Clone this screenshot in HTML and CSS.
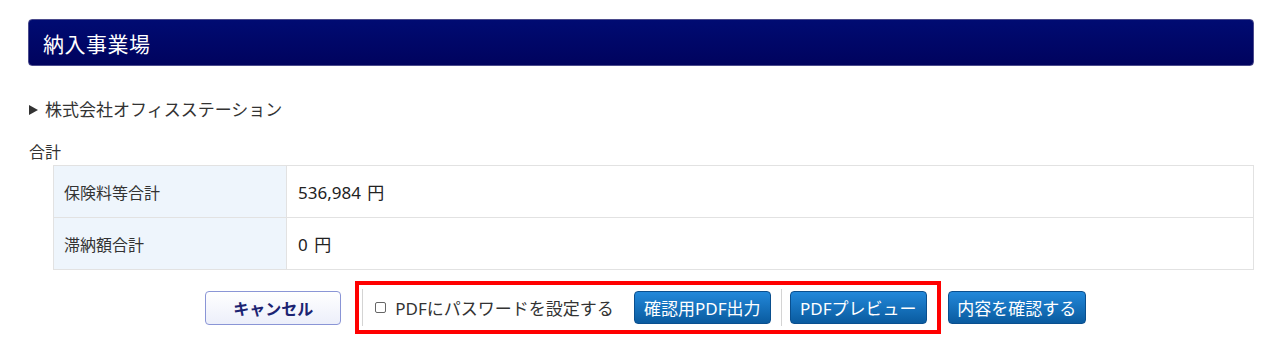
FILE: index.html
```html
<!doctype html>
<html lang="ja">
<head>
<meta charset="utf-8">
<meta name="viewport" content="width=device-width, initial-scale=1">
<title>納入事業場</title>
<link rel="stylesheet" href="styles.css">
</head>
<body>

	<main class="page">

		<h2 class="title">納入事業場</h2>

		<div class="office"><span class="arrow"></span>株式会社オフィスステーション</div>

		<div class="caption">合計</div>

		<table class="totals">
			<tr>
				<th>保険料等合計</th>
				<td>536,984 円</td>
			</tr>
			<tr>
				<th>滞納額合計</th>
				<td>0 円</td>
			</tr>
		</table>

		<div class="actions">

			<button class="btn-cancel">キャンセル</button>

			<div class="pdf-group">
				<span class="sep"></span>
				<label class="pwd"><input type="checkbox">PDFにパスワードを設定する</label>
				<button class="btn-blue">確認用PDF出力</button>
				<span class="sep sep-mid"></span>
				<button class="btn-blue">PDFプレビュー</button>
			</div>

			<button class="btn-blue btn-confirm">内容を確認する</button>

		</div>

	</main>

</body>
</html>
```

FILE: styles.css
```css
* { box-sizing: border-box; }

body { margin: 0; font-family: "Noto Sans", "Noto Sans CJK JP", sans-serif; color: #333; background: #fff; }

.page { padding: 19px 26px 0 28px; }

.title { margin: 0; height: 47px; padding: 0 14px; display: flex; align-items: center;
	font-size: 21px; font-weight: normal; color: #fff; letter-spacing: 0.5px;
	background: linear-gradient( #000b72, #00035e ); border: 1px solid #4b4b8c; border-radius: 4px; }

.office { margin-top: 32px; height: 24px; display: flex; align-items: center; font-size: 17px; line-height: 24px; }
.arrow { width: 0; height: 0; margin: 0 7px 0 1px; border-left: 9px solid #333;
	border-top: 5px solid transparent; border-bottom: 5px solid transparent; }

.caption { margin: 19px 0 0 1px; font-size: 16px; line-height: 22px; }

.totals { margin: 2px 0 0 25px; width: calc( 100% - 25px ); border-collapse: collapse; font-size: 16px; }
.totals th, .totals td { height: 52px; border: 1px solid #e2e2e2; text-align: left; font-weight: normal; }
.totals th { width: 233px; padding: 0 10px; background: #eef5fc; }
.totals td { padding: 0 11px; color: #222; font-size: 17px; word-spacing: 2px; }

.actions { margin-top: 11px; padding-left: 9px; display: flex; justify-content: center; align-items: center; }

button { font-family: inherit; cursor: pointer; }

.btn-cancel { width: 136px; height: 34px; margin-right: 14px; font-size: 16px; font-weight: bold; color: #1b2372;
	background: linear-gradient( #ffffff, #eceffa ); border: 1px solid #8a95d6; border-radius: 4px; }

.pdf-group { display: flex; align-items: center; height: 53px; padding: 0 10px 0 3px; border: 4px solid #f00; }

.sep { width: 1px; height: 37px; background: #d4d4d4; }
.sep-mid { margin: 0 8px 0 10px; }

.pwd { display: flex; align-items: center; margin: 0 20px 0 12px; font-size: 17px; color: #333; }
.pwd input { appearance: none; width: 11px; height: 11px; margin: 0 9px 0 0; border: 1px solid #666; border-radius: 2px; background: #fff; }

.btn-blue { width: 137px; height: 33px; padding: 0; font-size: 17px; color: #fff;
	background: linear-gradient( #2288da, #0a5b9f ); border: 1px solid #0a4f8e; border-radius: 4px; }

.btn-confirm { width: 138px; margin-left: 7px; }
```
